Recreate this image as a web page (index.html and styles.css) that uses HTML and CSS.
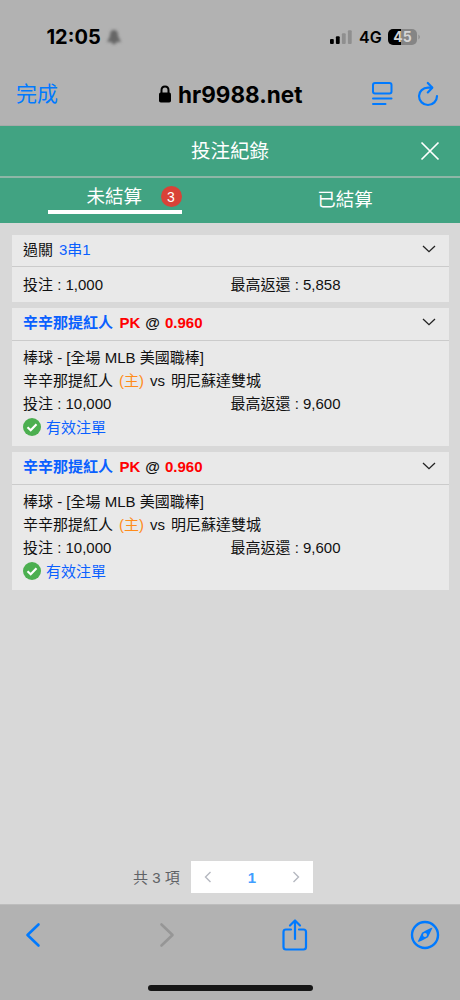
FILE: index.html
```html
<!DOCTYPE html>
<html lang="zh-Hant">
<head>
<meta charset="utf-8">
<meta name="viewport" content="width=device-width">
<title>投注紀錄</title>
<link rel="stylesheet" href="styles.css">
</head>
<body>
<div class="phone">
  <header class="chrome">
    <div class="status">
      <span class="clock">12:05</span>
      <svg class="bell" width="20" height="20" viewBox="0 0 20 20"><path d="M10 3C6.500 3 6 6 6 9L3 15H17L14 9C14 6 13.500 3 10 3Z" fill="#666"/><path d="M8 16H12" stroke="#666" stroke-width="2"/></svg>
      <svg class="signal" width="24" height="16" viewBox="0 0 24 16"><rect x="1" y="10" width="3.800" height="5" rx="1"/><rect x="6.900" y="7.300" width="3.800" height="7.700" rx="1"/><g fill="#8f8f8f"><rect x="12.900" y="4.300" width="3.800" height="10.700" rx="1"/><rect x="18.900" y="1.300" width="3.800" height="13.700" rx="1"/></g></svg>
      <span class="network">4G</span>
      <span class="battery">45</span>
      <svg class="tip" width="3" height="6" viewBox="0 0 3 6"><path d="M0.500 0.500Q3 3 0.500 5.500Z" fill="#858585"/></svg>
    </div>
    <div class="address">
      <span class="done">完成</span>
      <svg class="lock" width="14" height="18" viewBox="0 0 14 18"><path d="M3.500 9V5.200C3.500 0.300 10.500 0.300 10.500 5.200V9" fill="none" stroke="#000" stroke-width="2"/><rect x="1" y="7.500" width="12" height="10" rx="1.800"/></svg>
      <span class="domain">hr9988.net</span>
      <svg class="reader" width="22" height="26" viewBox="0 0 22 26" fill="none" stroke="#007aff" stroke-width="2" stroke-linecap="round"><rect x="2" y="2" width="18.500" height="10.500" rx="2"/><path d="M2 17.500H20.500M2 23H14.500"/></svg>
      <svg class="reload" width="22" height="26" viewBox="0 0 22 26" fill="none" stroke="#007aff" stroke-width="2.200" stroke-linecap="round" stroke-linejoin="round"><path d="M15 6.600H11C6 6.600 2 10.500 2 15C2 20 6 24 11 24C16 24 20 20 20 15"/><path d="M10.800 2L15.300 6.800L10.800 11.400"/></svg>
    </div>
  </header>

  <div class="titlebar">
    <h1>投注紀錄</h1>
    <svg class="close" width="20" height="20" viewBox="0 0 20 20"><path d="M1.500 1.500L18.500 18.500M18.500 1.500L1.500 18.500" stroke="#fff" stroke-width="1.700"/></svg>
  </div>
  <nav class="tabs">
    <div class="tab"><div class="active"><span>未結算</span><b class="count">3</b></div></div>
    <div class="tab">已結算</div>
  </nav>

  <main class="content">
    <section class="card parlay">
      <div class="head"><span>過關<i class="blue combo">3串1</i></span><svg class="chevron" width="14" height="8" viewBox="0 0 14 8"><path d="M1 1L7 6.700L13 1"/></svg></div>
      <div class="body"><div class="row"><span>投注 : 1,000</span><span>最高返還 : 5,858</span></div></div>
    </section>
    <section class="card">
      <div class="head bold"><span><i class="blue">辛辛那提紅人</i><i class="red pick">PK</i><i class="at">@</i><i class="red">0.960</i></span><svg class="chevron" width="14" height="8" viewBox="0 0 14 8"><path d="M1 1L7 6.700L13 1"/></svg></div>
      <div class="body">
        <div class="row">棒球 - [全場 MLB 美國職棒]</div>
        <div class="row">辛辛那提紅人<i class="home">(主)</i><i class="versus">vs</i>明尼蘇達雙城</div>
        <div class="row"><span>投注 : 10,000</span><span>最高返還 : 9,600</span></div>
        <div class="row valid"><svg width="18" height="18" viewBox="0 0 18 18"><circle cx="9" cy="9" r="9" fill="#4caf50"/><path d="M4.500 9.200L7.700 12.200L13.500 6.300" fill="none" stroke="#fff" stroke-width="2.200"/></svg>有效注單</div>
      </div>
    </section>
    <section class="card">
      <div class="head bold"><span><i class="blue">辛辛那提紅人</i><i class="red pick">PK</i><i class="at">@</i><i class="red">0.960</i></span><svg class="chevron" width="14" height="8" viewBox="0 0 14 8"><path d="M1 1L7 6.700L13 1"/></svg></div>
      <div class="body">
        <div class="row">棒球 - [全場 MLB 美國職棒]</div>
        <div class="row">辛辛那提紅人<i class="home">(主)</i><i class="versus">vs</i>明尼蘇達雙城</div>
        <div class="row"><span>投注 : 10,000</span><span>最高返還 : 9,600</span></div>
        <div class="row valid"><svg width="18" height="18" viewBox="0 0 18 18"><circle cx="9" cy="9" r="9" fill="#4caf50"/><path d="M4.500 9.200L7.700 12.200L13.500 6.300" fill="none" stroke="#fff" stroke-width="2.200"/></svg>有效注單</div>
      </div>
    </section>
    <div class="pagination">
      <span class="total">共 3 項</span>
      <div class="pager">
        <svg width="8" height="12" viewBox="0 0 8 12"><path d="M6.500 1L1.500 6L6.500 11"/></svg>
        <b>1</b>
        <svg width="8" height="12" viewBox="0 0 8 12"><path d="M1.500 1L6.500 6L1.500 11"/></svg>
      </div>
    </div>
  </main>

  <footer class="toolbar">
    <div class="actions">
      <svg width="16" height="26" viewBox="0 0 16 26"><path d="M13.500 2.500L2.500 13L13.500 23.500" /></svg>
      <svg class="disabled" width="16" height="26" viewBox="0 0 16 26"><path d="M2.500 2.500L13.500 13L2.500 23.500"/></svg>
      <svg class="share" width="28" height="34" viewBox="0 0 28 34"><path d="M10 11.500H5Q2.500 11.500 2.500 14V29Q2.500 31.500 5 31.500H22.500Q25 31.500 25 29V14Q25 11.500 22.500 11.500H18M14 21V3M9 7.500L14 2.500L19 7.500"/></svg>
      <svg class="compass" width="30" height="30" viewBox="0 0 30 30"><circle cx="15" cy="15" r="13"/><path fill="#007aff" stroke="none" fill-rule="evenodd" d="M22.500 7.800Q21 7.500 12 12.800L7.800 21.500Q8 23 18 17.200ZM15 13A2 2 0 1 0 15 17A2 2 0 1 0 15 13"/></svg>
    </div>
    <div class="homebar"></div>
  </footer>
</div>
</body>
</html>
```
FILE: styles.css
```css
* { box-sizing: border-box; }
body { margin: 0; font-family: "Liberation Sans", "Noto Sans CJK TC", sans-serif; font-size: 15px; color: #111; }
svg { display: block; flex: none; }
i { font-style: normal; }
.phone { width: 460px; height: 1000px; display: flex; flex-direction: column; overflow: hidden; background: #d8d8d8; }
.chrome { flex: none; height: 126px; background: #b2b2b2; border-bottom: 1px solid #a6a9a8; font-family: Inter, "Noto Sans CJK TC", sans-serif; color: #000; }
.status { display: flex; align-items: center; height: 74px; padding-left: 46.5px; }
.clock { width: 57.5px; font-size: 20px; font-weight: 700; white-space: nowrap; }
.bell { filter: blur(1.7px); }
.signal { margin-left: 205px; }
.network { width: 25px; margin-left: 6px; font-size: 16px; font-weight: 600; }
.battery { width: 29px; height: 16px; margin-left: 4px; border-radius: 5px; background: linear-gradient(90deg, #000 13px, #858585 13px); color: #d5d5d5; font-size: 14px; line-height: 16px; font-weight: 700; text-align: center; }
.tip { margin-left: 1px; }
.address { display: flex; align-items: center; height: 40px; padding-left: 16px; }
.done { width: 142px; color: #007aff; font-size: 21px; line-height: 40px; }
.domain { width: 125px; margin-left: 6px; font-size: 22.5px; font-weight: 700; white-space: nowrap; }
.reader { margin-left: 68px; }
.reload { margin-left: 24px; }

.titlebar { flex: none; display: grid; grid-template-columns: 60px 1fr 60px; align-items: center; justify-items: center; height: 52px; background: #41a382; border-bottom: 2px solid #8eb6a7; color: #fff; }
.titlebar h1 { grid-column: 2; margin: 0; font-size: 19.5px; line-height: 50px; font-weight: 400; }
.tabs { flex: none; display: grid; grid-template-columns: 1fr 1fr; height: 45px; background: #41a382; color: #fff; font-size: 18.5px; line-height: 43px; }
.tab { text-align: center; }
.active { display: flex; align-items: center; width: 134px; height: 36px; margin-left: 48px; padding-left: 38.5px; border-bottom: 4px solid #fff; line-height: 36px; }
.active span { padding-top: 5px; }
.count { width: 21px; height: 21px; margin: 4px 0 0 18.5px; border-radius: 50%; background: #d94237; font-size: 14px; line-height: 22px; font-weight: 400; }

.content { flex: 1; display: flex; flex-direction: column; gap: 6px; padding: 11.5px 11.5px 11px; }
.card { background: #e9e9e9; height: 138px; }
.card.parlay { height: 67.5px; }
.head { display: flex; justify-content: space-between; align-items: center; height: 32.5px; padding: 0 13px 0 11.5px; border-bottom: 1px solid #cbcbcb; line-height: 30px; }
.head > span { margin-top: -1px; }
.bold { font-weight: 700; }
.blue { color: #0a60ff; }
.combo { margin-left: 6px; }
.red { color: #f00; }
.pick { margin-left: 6.5px; }
.at { margin: 0 5px; }
.chevron { margin-bottom: 3px; fill: none; stroke: #222; stroke-width: 1.3; }
.body { padding: 5px 11.5px 0; }
.parlay .body { padding-top: 6px; }
.row { display: flex; height: 23px; line-height: 23px; white-space: nowrap; }
.row span:first-child { width: 207.5px; }
.home { margin-left: 6px; color: #ff8c1a; }
.versus { margin: 0 6px; }
.valid { height: 25px; gap: 5px; align-items: center; color: #0a60ff; }
.pagination { display: flex; align-items: center; margin-top: auto; padding-left: 121.5px; }
.total { width: 58px; padding-bottom: 2px; color: #606266; }
.pager { display: flex; align-items: center; justify-content: space-between; width: 122px; height: 32px; padding: 0 13px; background: #fff; color: #409eff; }
.pager svg { fill: none; stroke: #b5b8c0; stroke-width: 1.4; }

.toolbar { flex: none; height: 96px; background: #b2b2b2; border-top: 1px solid #bdbdbd; }
.actions { display: flex; align-items: center; height: 60px; padding-left: 24.5px; fill: none; stroke: #007aff; stroke-width: 2.6; stroke-linecap: round; stroke-linejoin: round; }
.disabled { margin-left: 118px; stroke: #969696; }
.share { margin-left: 106.5px; stroke-width: 2.2; }
.compass { margin-left: 101px; stroke-width: 2.4; }
.homebar { width: 165px; height: 6px; margin: 20px auto 0; border-radius: 3px; background: #161616; }
```
